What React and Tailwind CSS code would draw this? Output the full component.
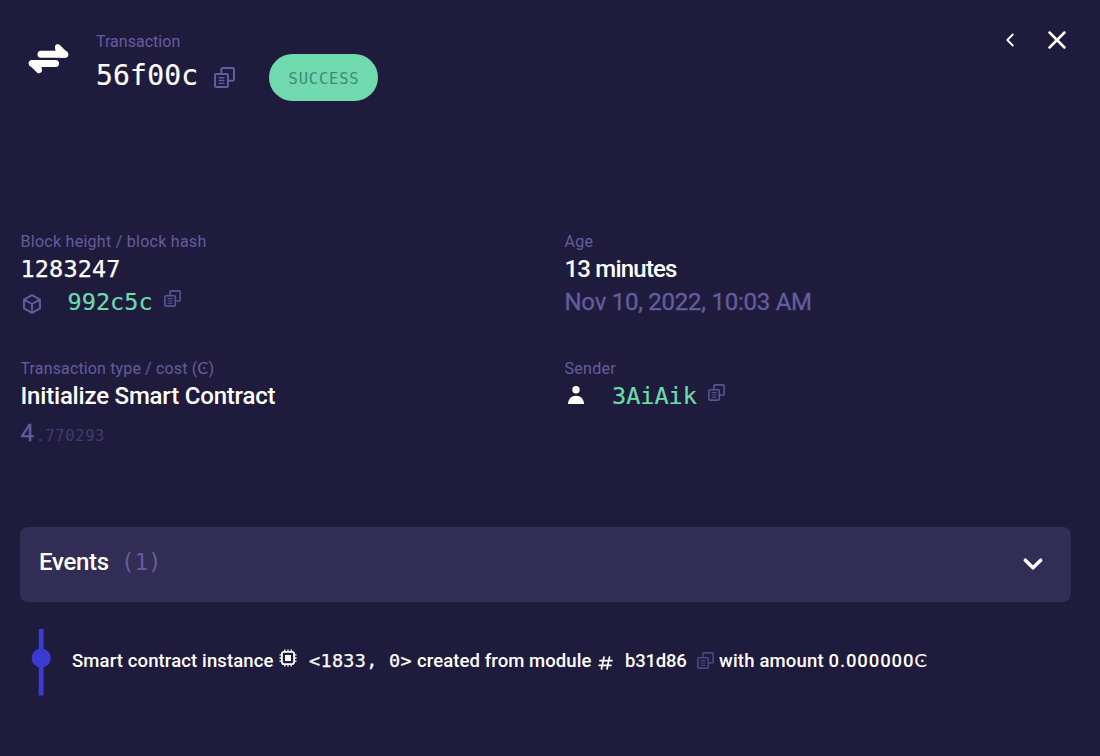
const SANS = "font-['Roboto','DejaVu_Sans',sans-serif]";
const MONO = "font-['DejaVu_Sans_Mono',monospace]";

function CopyIcon({ className }) {
  return (
    <svg viewBox="0 0 20 20" className={className} fill="none" stroke="currentColor" strokeWidth="1.900" strokeLinejoin="round" strokeLinecap="round">
      <path d="M7 6.600V2a1 1 0 0 1 1-1h10a1 1 0 0 1 1 1v10a1 1 0 0 1-1 1H13.400" />
      <rect x="1" y="6.700" width="12.300" height="12.300" rx="1.200" />
      <path d="M4.800 10.200h4.700M4.800 12.900h4.700M4.800 15.600h4.700" strokeWidth="1.300" />
    </svg>
  );
}

function TransferIcon() {
  return (
    <svg viewBox="0 0 42 32" className="h-8 w-[42px]" fill="currentColor" stroke="currentColor" strokeLinecap="round" strokeLinejoin="round">
      <path d="M13 11.300H36.500" strokeWidth="7" />
      <path d="M30 4.300L37.300 11.600H31z" strokeWidth="6" />
      <path d="M4.500 20.500H27.500" strokeWidth="7" />
      <path d="M11 27.300L3.700 20.200H10z" strokeWidth="6" />
    </svg>
  );
}

function CubeIcon() {
  return (
    <svg viewBox="0 0 20 20" className="mt-[9px] size-5 text-[#655c9e]" fill="none" stroke="currentColor" strokeWidth="1.900" strokeLinejoin="round" strokeLinecap="round">
      <path d="M10 1.200l8 4.400v8.800L10 18.800l-8-4.400V5.600zM2 5.600L10 10l8-4.400M10 10v8.800" />
    </svg>
  );
}

function ChipIcon() {
  return (
    <svg viewBox="0 0 18 18" className="size-[18px]" fill="none" stroke="currentColor" strokeWidth="1.800">
      <rect x="2.900" y="2.900" width="12.200" height="12.200" rx="2" />
      <rect x="6" y="6" width="6" height="6" fill="currentColor" stroke="none" />
      <path d="M5.800.5v2M9 .5v2M12.200.5v2M5.800 15.500v2M9 15.500v2M12.200 15.500v2M.5 5.800h2M.5 9h2M.5 12.200h2M15.500 5.800h2M15.500 9h2M15.500 12.200h2" strokeWidth="1.300" />
    </svg>
  );
}

function Header() {
  return (
    <header className="flex h-[230px] items-start pl-7">
      <div className="w-[68px] pt-[43px]"><TransferIcon /></div>
      <div className="w-[173px] pt-8">
        <div className="text-[16px] leading-5 tracking-[0.020px] text-[#655c9e]">Transaction</div>
        <div className="flex items-start">
          <h1 className={`${MONO} w-[118px] text-[28px] leading-[48px] tracking-[0.200px] [-webkit-text-stroke:0.200px]`}>56f00c</h1>
          <CopyIcon className="mt-[15px] size-[21px] text-[#655c9e]" />
        </div>
      </div>
      <div className={`${MONO} mt-[54px] flex h-[47px] w-[109px] items-center justify-center rounded-full bg-[#70d9ae] pt-1 pl-px text-[15.500px] tracking-[0.800px] text-[#3f8a76]`}>SUCCESS</div>
      <svg viewBox="0 0 10 14" className="mt-[33px] ml-auto h-[14px] w-[10px]" fill="none" stroke="currentColor" strokeWidth="1.800" strokeLinecap="round" strokeLinejoin="round"><path d="M7.800 1.500L2.300 7l5.500 5.500" /></svg>
      <svg viewBox="0 0 20 20" className="mt-[30px] mr-[33px] ml-8 size-5" fill="none" stroke="currentColor" strokeWidth="2.500" strokeLinecap="round"><path d="M2.500 2.500l15 15M17.500 2.500l-15 15" /></svg>
    </header>
  );
}

function Label({ children, tracking = "tracking-[0.270px]" }) {
  return <div className={`h-[23px] text-[16px] leading-[23px] whitespace-nowrap text-[#655c9e] ${tracking}`}>{children}</div>;
}

function Details() {
  return (
    <section className="grid h-[297px] grid-cols-[544px_1fr] grid-rows-[127px_170px] pl-[20.500px]">
      <div>
        <Label>Block height / block hash</Label>
        <div className={`${MONO} text-[23.500px] leading-8 tracking-[0.150px] [-webkit-text-stroke:0.250px]`}>1283247</div>
        <div className="flex h-[35px] items-start">
          <div className="ml-px w-[46px]"><CubeIcon /></div>
          <div className={`${MONO} w-[96.500px] text-[23.500px] leading-[34px] tracking-[0.050px] text-[#6adbaa] [-webkit-text-stroke:0.200px]`}>992c5c</div>
          <CopyIcon className="mt-[5px] size-[17px] text-[#5b5292]" />
        </div>
      </div>
      <div>
        <Label>Age</Label>
        <div className="text-[24px] leading-8 font-medium tracking-[-0.800px]">13 minutes</div>
        <div className="text-[24px] leading-[34px] tracking-[-0.250px] text-[#655c9e] [-webkit-text-stroke:0.300px]">Nov 10, 2022, 10:03 AM</div>
      </div>
      <div>
        <Label tracking="tracking-[0.140px]">Transaction type / cost (Ͼ)</Label>
        <div className="text-[24px] leading-8 font-medium tracking-[-0.200px]">Initialize Smart Contract</div>
        <div className="flex items-baseline leading-[43px] text-[#655c9e]">
          <span className="w-[14px] text-[24px] [-webkit-text-stroke:0.300px]">4</span>
          <span className={`${MONO} pl-px text-[15.500px] tracking-[0.600px] text-[#413a6d]`}>.770293</span>
        </div>
      </div>
      <div>
        <Label>Sender</Label>
        <div className="flex items-start">
          <svg viewBox="0 0 18 20" className="mt-[5px] mr-[27.500px] ml-[2px] h-5 w-[18px]" fill="currentColor"><circle cx="9" cy="4.700" r="3.700" /><path d="M1 19c0-5 3.500-8.300 8-8.300s8 3.300 8 8.300z" /></svg>
          <div className={`${MONO} w-[96px] text-[23.500px] leading-8 text-[#6adbaa] [-webkit-text-stroke:0.200px]`}>3AiAik</div>
          <CopyIcon className="mt-[4px] size-[17px] text-[#5b5292]" />
        </div>
      </div>
    </section>
  );
}

function Events() {
  return (
    <section className="pr-[29px] pl-5">
      <div className="flex h-[75px] items-center rounded-lg bg-[#312d54] pr-[27px] pb-[2px] pl-[19px]">
        <h2 className="w-[82px] pb-[3px] text-[24px] font-medium tracking-[-0.300px]">Events</h2>
        <span className={`${MONO} pb-0.5 text-[22.500px] text-[#655c9e]`}>(1)</span>
        <svg viewBox="0 0 22 16" className="ml-auto h-4 w-[22px]" fill="none" stroke="currentColor" strokeWidth="3.500" strokeLinecap="round" strokeLinejoin="round"><path d="M3.300 4.200L11 11.800l7.700-7.600" /></svg>
      </div>
      <div className="mt-[27px] flex h-[67px]">
        <svg viewBox="0 0 20 67" className="ml-[11px] h-[67px] w-5 shrink-0" fill="#3b3bd2"><rect x="7.700" y="0" width="4.900" height="66.500" /><circle cx="10.200" cy="29" r="9.600" /></svg>
        <div className="ml-[21px] flex h-[63px] items-center text-[18.500px] font-medium whitespace-nowrap">
          <span className="w-[206.500px] pt-0.5 tracking-[0.120px]">Smart contract instance</span>
          <span className="w-[30.500px] pb-[5px]"><ChipIcon /></span>
          <span className={`${MONO} w-[108px] text-[18.500px] font-normal tracking-[0.300px] whitespace-pre [-webkit-text-stroke:0.250px]`}>{"<1833, 0>"}</span>
          <span className="w-[181px] pt-0.5 tracking-[0.080px]">created from module</span>
          <svg viewBox="0 0 15 14" className="mt-1 mr-3 h-[14px] w-[15px]" fill="none" stroke="currentColor" strokeWidth="1.700" strokeLinecap="round"><path d="M6 1L3.500 13M11.500 1L9 13M2 4.700h12M1 9.300h12" /></svg>
          <span className="w-[72px] pt-0.5 tracking-[-0.200px]">b31d86</span>
          <CopyIcon className="mr-[5px] size-[17px] text-[#4c4581]" />
          <span className="pt-0.5 tracking-[0.180px]">with amount <span className="tracking-[0.870px]">0.000000</span>Ͼ</span>
        </div>
      </div>
    </section>
  );
}

export default function App() {
  return (
    <main className={`${SANS} h-[756px] w-[1100px] overflow-hidden bg-[#1f1b3d] text-white`}>
      <Header />
      <Details />
      <Events />
    </main>
  );
}
